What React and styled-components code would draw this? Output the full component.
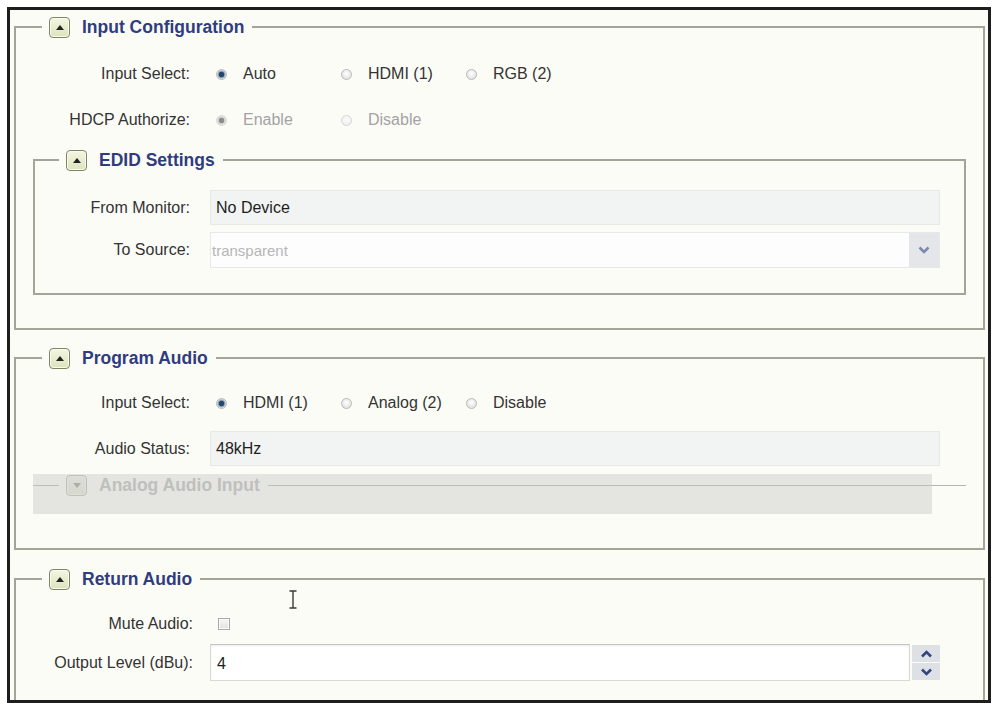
import styled, { createGlobalStyle } from "styled-components";

const GlobalStyle = createGlobalStyle`
  html, body {
    margin: 0;
    padding: 0;
    background: #ffffff;
  }
  body {
    font-family: "Liberation Sans", Arial, sans-serif;
  }
`;

const Frame = styled.div`
  position: relative;
  box-sizing: border-box;
  width: 984px;
  height: 696px;
  margin: 7px 0 0 7px;
  padding-top: 6px;
  border: 3px solid #1e1e1e;
  background: #fcfcf7;
  overflow: hidden;
`;

const Panel = styled.fieldset`
  margin: ${(p) => p.$mt || 0}px 3px 0 4px;
  padding: ${(p) => p.$pt}px 0 ${(p) => p.$pb}px;
  border: 2px solid #a4a597;
  min-width: 0;
`;

const SubPanel = styled.fieldset`
  margin: ${(p) => p.$mt || 0}px 17px 0;
  padding: 19px 0 25px;
  border: 2px solid #a4a597;
  min-width: 0;
`;

const Legend = styled.legend`
  display: flex;
  align-items: center;
  gap: 12px;
  height: 22px;
  margin-left: ${(p) => p.$indent ?? 26}px;
  padding: 0 8px 0 7px;
  font-size: 17.5px;
  font-weight: bold;
  color: ${(p) => (p.$faded ? "#b9b9b9" : "#2f3c7e")};
`;

const Toggle = styled.span`
  display: flex;
  align-items: center;
  justify-content: center;
  box-sizing: border-box;
  width: 21px;
  height: 21px;
  border: 1px solid ${(p) => (p.$faded ? "#b9bbae" : "#7f8567")};
  border-radius: 4px;
  background: ${(p) =>
    p.$faded
      ? "linear-gradient(#f0f0ea, #e2e3d8)"
      : "linear-gradient(#f4f6e2, #dde3bb)"};
  box-shadow: inset 0 0 0 1px ${(p) => (p.$faded ? "#f4f4ef" : "#fafbee")};
`;

const Arrow = styled.span`
  width: 0;
  height: 0;
  border-left: 4px solid transparent;
  border-right: 4px solid transparent;
  ${(p) =>
    p.$down
      ? `border-top: 5px solid ${p.$faded ? "#9a9a9a" : "#222"};`
      : `border-bottom: 5px solid ${p.$faded ? "#9a9a9a" : "#222"};`}
`;

const Row = styled.div`
  display: grid;
  grid-template-columns: ${(p) => p.$labelWidth}px 1fr;
  column-gap: ${(p) => p.$gap ?? 20}px;
  align-items: center;
  min-height: ${(p) => p.$h ?? 36}px;
  margin-top: ${(p) => p.$mt ?? 0}px;
`;

const Label = styled.span`
  text-align: right;
  font-size: 16px;
  color: #333;
  white-space: nowrap;
`;

const Options = styled.div`
  display: grid;
  grid-template-columns: repeat(3, 125px);
  padding-left: 6px;
`;

const Option = styled.label`
  display: flex;
  align-items: center;
  gap: 16px;
  font-size: 16px;
  color: ${(p) => (p.$disabled ? "#a3a3a3" : "#333")};
  white-space: nowrap;
`;

const RadioDot = styled.span`
  flex: none;
  box-sizing: border-box;
  width: 11px;
  height: 11px;
  border-radius: 50%;
  border: 1px solid ${(p) => (p.$disabled ? "#d6d6d6" : "#b9b9b9")};
  background: ${(p) =>
    p.$checked
      ? p.$disabled
        ? "radial-gradient(circle, #8d8d8d 0 2.5px, #c9c9c9 3px, #ececec 4.5px)"
        : "radial-gradient(circle, #24466b 0 2.5px, #7f97b0 3px, #dde3ea 4.5px)"
      : p.$disabled
      ? "radial-gradient(circle at 50% 40%, #fbfbfb, #ececec)"
      : "radial-gradient(circle at 50% 40%, #ffffff, #d9d9d9)"};
`;

const Field = styled.div`
  box-sizing: border-box;
  display: flex;
  align-items: center;
  width: ${(p) => p.$w ?? 730}px;
  height: ${(p) => p.$h ?? 35}px;
  padding: 0 5px;
  background: #f2f4f3;
  border: 1px solid #e6e9e8;
  font-size: 16px;
  color: #1e1e1e;
`;

const Select = styled.div`
  box-sizing: border-box;
  display: flex;
  width: 730px;
  height: 36px;
  background: #fdfdfd;
  border: 1px solid #e6e9e9;
`;

const SelectValue = styled.span`
  flex: 1;
  display: flex;
  align-items: center;
  padding-left: 1px;
  font-size: 15px;
  color: #b6b6b6;
`;

const SelectButton = styled.span`
  display: flex;
  align-items: center;
  justify-content: center;
  width: 30px;
  background: #e4e6ea;
`;

const SpinRow = styled.div`
  display: flex;
  gap: 2px;
  width: 730px;
`;

const SpinInput = styled.div`
  box-sizing: border-box;
  display: flex;
  align-items: center;
  flex: 1;
  height: 37px;
  padding: 2px 6px 0;
  background: #ffffff;
  border: 1px solid #d8d8d8;
  border-top-color: #c4c4c4;
  box-shadow: inset 0 1px 2px rgba(0, 0, 0, 0.08);
  font-size: 16px;
  color: #1e1e1e;
`;

const SpinButtons = styled.div`
  display: flex;
  flex-direction: column;
  justify-content: center;
  gap: 1px;
  width: 28px;
`;

const SpinButton = styled.span`
  display: flex;
  align-items: center;
  justify-content: center;
  height: 17px;
  background: #dde0e5;
`;

const Checkbox = styled.span`
  box-sizing: border-box;
  width: 12px;
  height: 12px;
  margin-left: 8px;
  border: 1px solid #aaaaaa;
  background: linear-gradient(#f6f6f6, #e2e2e2);
  box-shadow: inset 0 0 0 1px #fafafa;
`;

const Collapsed = styled.div`
  position: relative;
  height: 40px;
  margin: 8px 17px 0;
`;

const CollapsedSet = styled.fieldset`
  margin: 0;
  padding: 0;
  border: 0;
  border-top: 1px solid #b5b5b5;
  min-width: 0;
`;

const Shade = styled.div`
  position: absolute;
  left: 0;
  top: 0;
  right: 34px;
  bottom: 0;
  background: rgba(200, 200, 196, 0.45);
`;

const Cursor = styled.svg`
  position: absolute;
  left: 278px;
  top: 580px;
`;

const Chevron = ({ up, color, w = 12 }) => (
  <svg width={w} height="8" viewBox="0 0 12 8">
    <polyline
      points={up ? "1.5,6.5 6,2 10.5,6.5" : "1.5,1.5 6,6 10.5,1.5"}
      fill="none"
      stroke={color}
      strokeWidth="2.6"
    />
  </svg>
);

const Radio = ({ label, checked, disabled }) => (
  <Option $disabled={disabled}>
    <RadioDot $checked={checked} $disabled={disabled} />
    {label}
  </Option>
);

const Head = ({ title, indent, faded, collapsed }) => (
  <Legend $indent={indent} $faded={faded}>
    <Toggle $faded={faded}>
      <Arrow $down={collapsed} $faded={faded} />
    </Toggle>
    {title}
  </Legend>
);

const App = () => {
  return (
    <>
      <GlobalStyle />
      <Frame>
        <Panel $pt={18} $pb={33}>
          <Head title="Input Configuration" />
          <Row $labelWidth={174}>
            <Label>Input Select:</Label>
            <Options>
              <Radio label="Auto" checked />
              <Radio label="HDMI (1)" />
              <Radio label="RGB (2)" />
            </Options>
          </Row>
          <Row $labelWidth={174} $mt={10}>
            <Label>HDCP Authorize:</Label>
            <Options>
              <Radio label="Enable" checked disabled />
              <Radio label="Disable" disabled />
            </Options>
          </Row>
          <SubPanel $mt={11}>
            <Head title="EDID Settings" indent={24} />
            <Row $labelWidth={155} $h={35}>
              <Label>From Monitor:</Label>
              <Field>No Device</Field>
            </Row>
            <Row $labelWidth={155} $h={35} $mt={7}>
              <Label>To Source:</Label>
              <Select>
                <SelectValue>transparent</SelectValue>
                <SelectButton>
                  <Chevron color="#7b89ab" />
                </SelectButton>
              </Select>
            </Row>
          </SubPanel>
        </Panel>

        <Panel $mt={17} $pt={16} $pb={34}>
          <Head title="Program Audio" />
          <Row $labelWidth={174}>
            <Label>Input Select:</Label>
            <Options>
              <Radio label="HDMI (1)" checked />
              <Radio label="Analog (2)" />
              <Radio label="Disable" />
            </Options>
          </Row>
          <Row $labelWidth={174} $h={35} $mt={10}>
            <Label>Audio Status:</Label>
            <Field>48kHz</Field>
          </Row>
          <Collapsed>
            <CollapsedSet>
              <Head title="Analog Audio Input" faded collapsed />
            </CollapsedSet>
            <Shade />
          </Collapsed>
        </Panel>

        <Panel $mt={18} $pt={16} $pb={40}>
          <Head title="Return Audio" />
          <Row $labelWidth={177} $gap={17}>
            <Label>Mute Audio:</Label>
            <Checkbox />
          </Row>
          <Row $labelWidth={177} $gap={17} $h={37} $mt={2}>
            <Label>Output Level (dBu):</Label>
            <SpinRow>
              <SpinInput>4</SpinInput>
              <SpinButtons>
                <SpinButton>
                  <Chevron up color="#33457c" w={13} />
                </SpinButton>
                <SpinButton>
                  <Chevron color="#33457c" w={13} />
                </SpinButton>
              </SpinButtons>
            </SpinRow>
          </Row>
        </Panel>

        <Cursor width="10" height="19" viewBox="0 0 10 19">
          <path
            d="M1.5 1h7M5 1v17M1.5 18h7"
            fill="none"
            stroke="#3a3a3a"
            strokeWidth="1.4"
          />
        </Cursor>
      </Frame>
    </>
  );
};

export default App;
